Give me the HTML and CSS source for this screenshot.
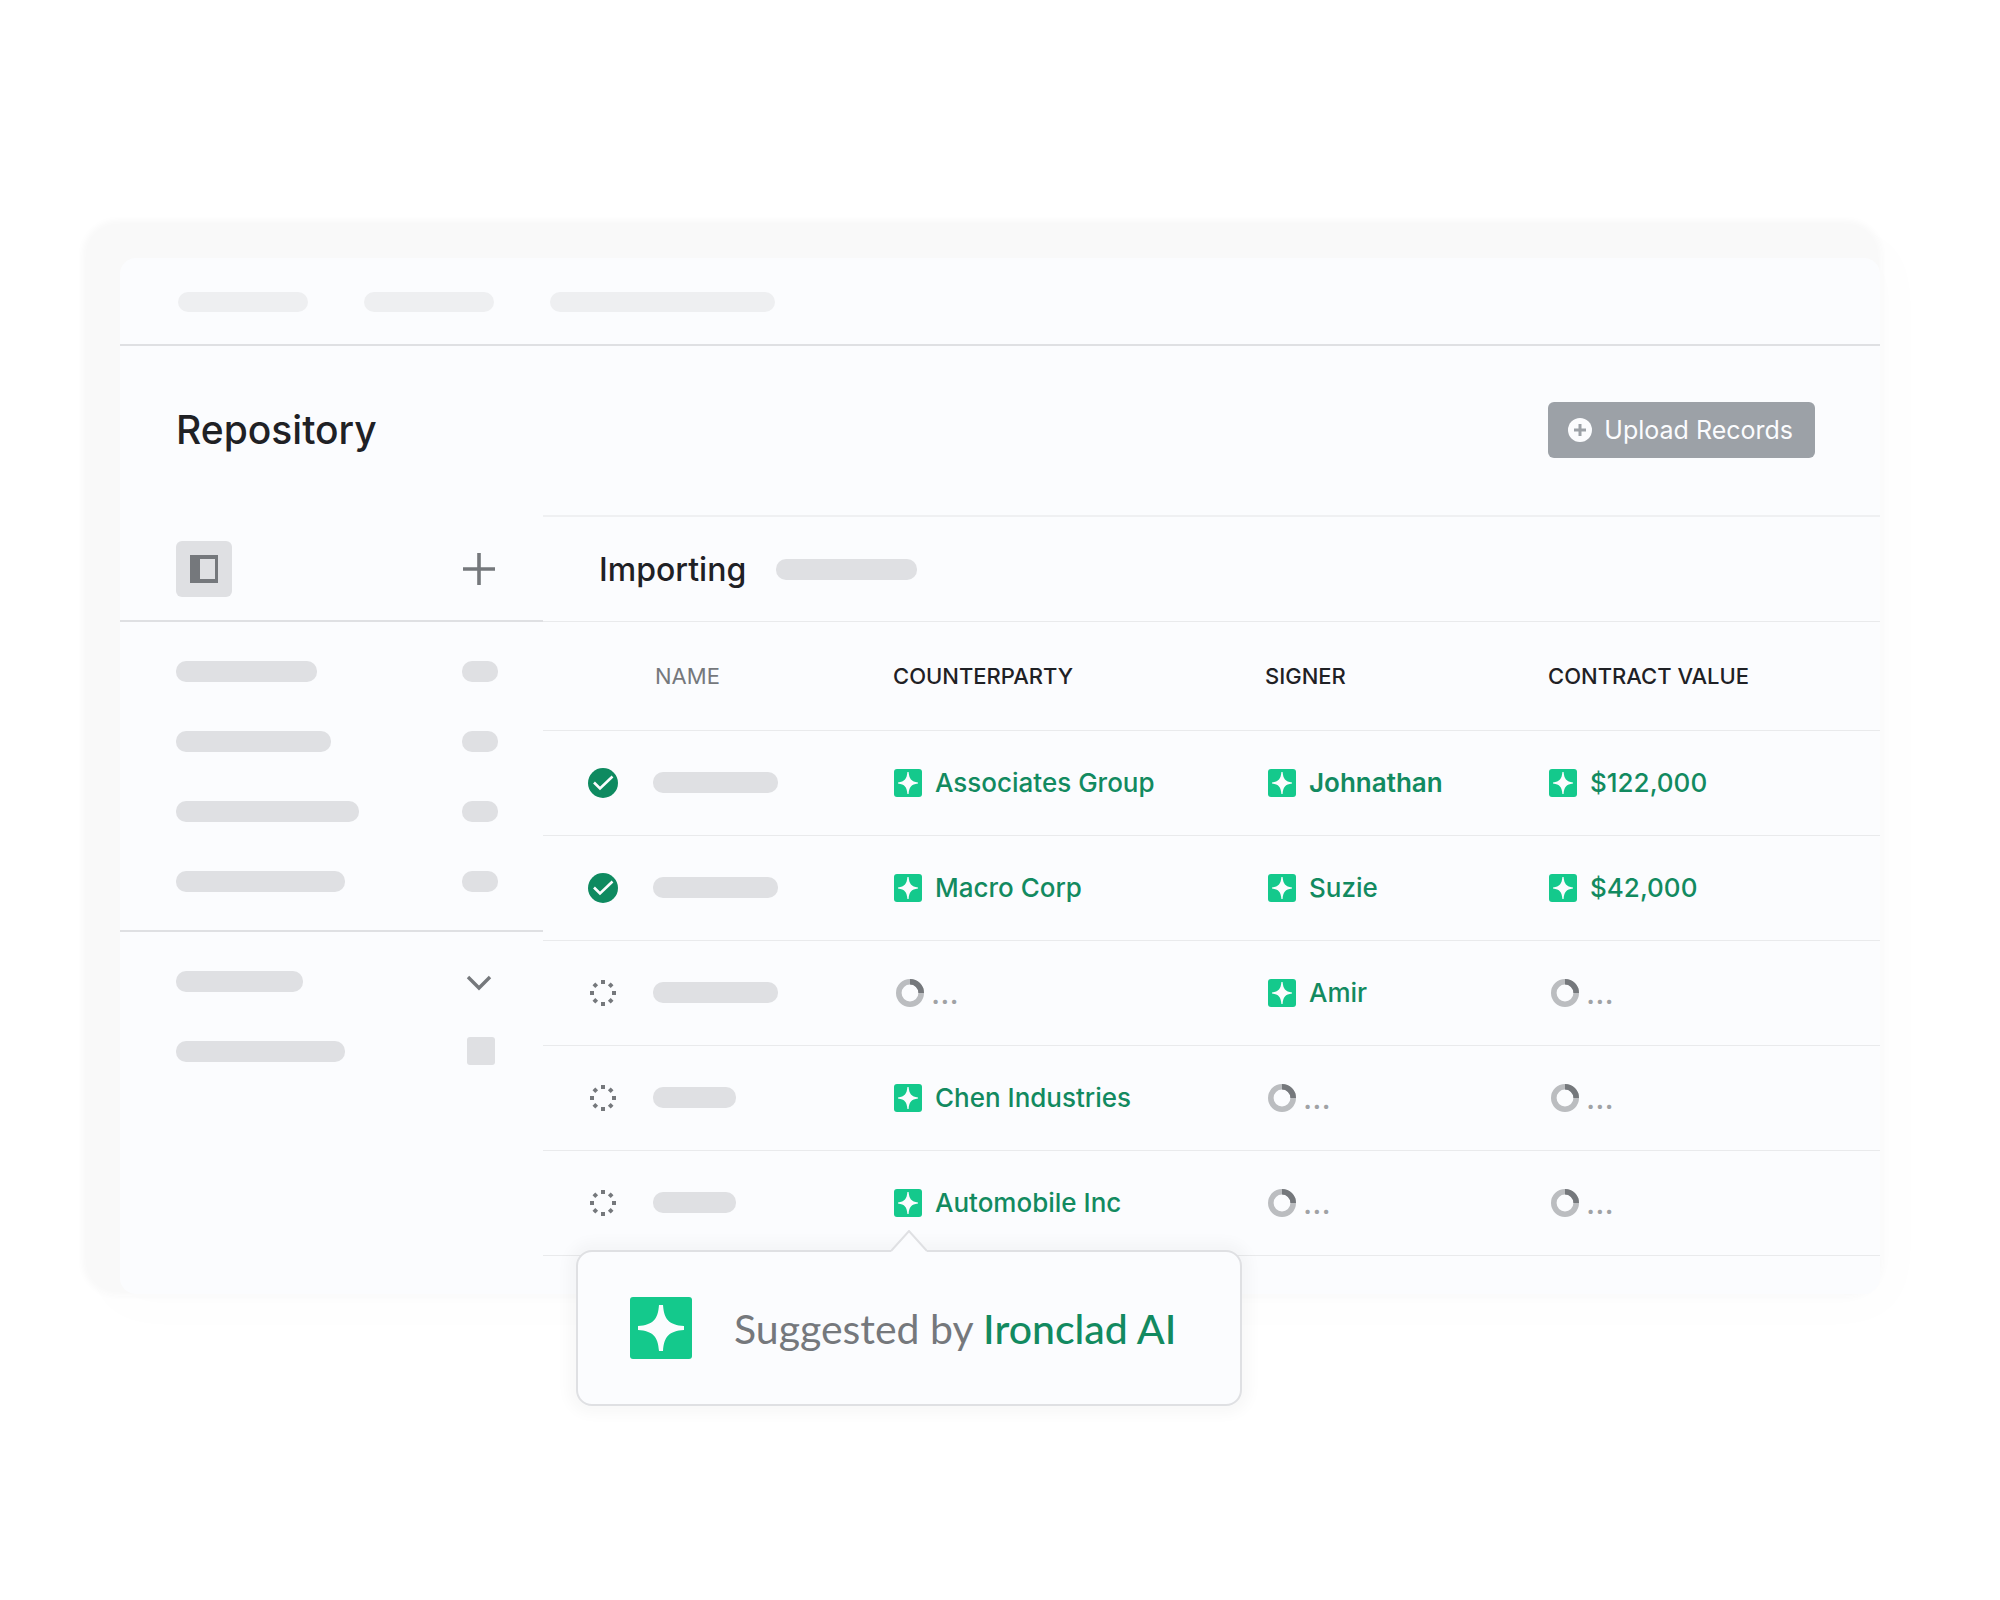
FILE: index.html
```html
<!DOCTYPE html>
<html lang="en">
<head>
  <meta charset="UTF-8">
  <meta name="viewport" content="width=device-width, initial-scale=1.0">
  <title>Repository</title>
  <link rel="stylesheet" href="styles.css">
</head>
<body>
  <!-- shared icons -->
  <svg class="sprite" aria-hidden="true">
    <symbol id="star" viewBox="0 0 28 28">
      <rect width="28" height="28" rx="3" fill="#14c98c"/>
      <path fill="#fbfcfe" d="M13.400 3h1.200c.6 6.800 2.600 9.600 9.400 10.400v1.200c-6.800.8-8.800 3.600-9.400 10.400h-1.200c-.6-6.800-2.600-9.600-9.400-10.400v-1.200c6.800-.8 8.800-3.600 9.400-10.400z"/>
    </symbol>
    <symbol id="check" viewBox="0 0 30 30">
      <circle cx="15" cy="15" r="15" fill="#0e8a60"/>
      <path d="M6 14.500l6 6L24.500 8.500" fill="none" stroke="#fbfcfe" stroke-width="2.600"/>
    </symbol>
    <symbol id="dots" viewBox="0 0 30 30">
      <g fill="#75787c">
        <path d="M13 2h4v4h-4zM13 24h4v4h-4zM2 13h4v4H2zM24 13h4v4h-4z"/>
        <path d="M7.300 4.500l2.800 2.800-2.800 2.800-2.800-2.800zM22.700 4.500l2.800 2.800-2.800 2.800-2.800-2.800zM7.300 19.900l2.800 2.800-2.800 2.800-2.800-2.800zM22.700 19.900l2.800 2.800-2.800 2.800-2.800-2.800z"/>
      </g>
    </symbol>
    <symbol id="spinner" viewBox="0 0 28 28">
      <circle cx="14" cy="14" r="11.200" fill="none" stroke="#bbbdc0" stroke-width="5.600"/>
      <path d="M14 2.800A11.200 11.200 0 0 1 25.200 14" fill="none" stroke="#75787c" stroke-width="5.600"/>
    </symbol>
  </svg>

  <main class="stage">
    <div class="window">
      <nav class="topbar">
        <span class="pill light w-130"></span>
        <span class="pill light w-130"></span>
        <span class="pill light w-225"></span>
      </nav>

      <header class="page-head">
        <h1>Repository</h1>
        <button class="upload" type="button">
          <svg viewBox="0 0 24 24"><circle cx="12" cy="12" r="12" fill="#fbfcfe"/><path d="M12 6v12M6 12h12" stroke="#9ca1a7" stroke-width="3"/></svg>
          Upload Records
        </button>
      </header>

      <div class="columns">
        <aside class="sidebar">
          <div class="side-tools">
            <button class="panel-btn" type="button" aria-label="Toggle sidebar">
              <svg viewBox="0 0 28 28"><path fill="#75787c" fill-rule="evenodd" d="M0 0h28v28H0zM10 4v20h15V4z"/></svg>
            </button>
            <button class="icon-btn" type="button" aria-label="Add">
              <svg viewBox="0 0 32 32"><path d="M16 0v32M0 16h32" stroke="#75787c" stroke-width="3.600"/></svg>
            </button>
          </div>
          <ul class="side-list">
            <li><span class="pill w-141"></span><span class="pill w-36"></span></li>
            <li><span class="pill w-155"></span><span class="pill w-36"></span></li>
            <li><span class="pill w-183"></span><span class="pill w-36"></span></li>
            <li><span class="pill w-169"></span><span class="pill w-36"></span></li>
          </ul>
          <ul class="side-list last">
            <li>
              <span class="pill w-127"></span>
              <button class="icon-btn chevron" type="button" aria-label="Expand">
                <svg viewBox="0 0 32 32"><path d="M5 12l11 11 11-11" fill="none" stroke="#75787c" stroke-width="3.400"/></svg>
              </button>
            </li>
            <li><span class="pill w-169"></span><span class="square"></span></li>
          </ul>
        </aside>

        <section class="content">
          <div class="importing">
            <h2>Importing</h2>
            <span class="pill w-141"></span>
          </div>
          <table>
            <colgroup>
              <col class="c-status"><col class="c-name"><col class="c-party"><col class="c-signer"><col>
            </colgroup>
            <thead>
              <tr>
                <th aria-label="Status"></th>
                <th class="muted">NAME</th>
                <th>COUNTERPARTY</th>
                <th>SIGNER</th>
                <th>CONTRACT VALUE</th>
              </tr>
            </thead>
            <tbody>
              <tr>
                <td><svg class="status"><use href="#check"/></svg></td>
                <td><span class="pill w-125"></span></td>
                <td><div class="value"><svg><use href="#star"/></svg>Associates Group</div></td>
                <td><div class="value strong"><svg><use href="#star"/></svg>Johnathan</div></td>
                <td><div class="value"><svg><use href="#star"/></svg>$122,000</div></td>
              </tr>
              <tr>
                <td><svg class="status"><use href="#check"/></svg></td>
                <td><span class="pill w-125"></span></td>
                <td><div class="value"><svg><use href="#star"/></svg>Macro Corp</div></td>
                <td><div class="value"><svg><use href="#star"/></svg>Suzie</div></td>
                <td><div class="value"><svg><use href="#star"/></svg>$42,000</div></td>
              </tr>
              <tr>
                <td><svg class="status"><use href="#dots"/></svg></td>
                <td><span class="pill w-125"></span></td>
                <td><div class="value pending"><svg><use href="#spinner"/></svg>...</div></td>
                <td><div class="value"><svg><use href="#star"/></svg>Amir</div></td>
                <td><div class="value pending"><svg><use href="#spinner"/></svg>...</div></td>
              </tr>
              <tr>
                <td><svg class="status"><use href="#dots"/></svg></td>
                <td><span class="pill w-83"></span></td>
                <td><div class="value"><svg><use href="#star"/></svg>Chen Industries</div></td>
                <td><div class="value pending"><svg><use href="#spinner"/></svg>...</div></td>
                <td><div class="value pending"><svg><use href="#spinner"/></svg>...</div></td>
              </tr>
              <tr>
                <td><svg class="status"><use href="#dots"/></svg></td>
                <td><span class="pill w-83"></span></td>
                <td>
                  <div class="value anchor"><svg><use href="#star"/></svg>Automobile Inc
                    <div class="tooltip" role="tooltip">
                      <svg class="arrow" viewBox="0 0 36 22"><path d="M0 21L18 1l18 20v1H0z" fill="#fbfcfe"/><path d="M0 21L18 1l18 20" fill="none" stroke="#dfe0e3" stroke-width="2"/></svg>
                      <svg class="tip-icon" viewBox="0 0 62 62"><rect width="62" height="62" rx="3" fill="#14c98c"/><path fill="#fbfcfe" d="M29 8h4c1 14.500 6 20 21 21v4c-15 1-20 6.500-21 21h-4c-1-14.500-6-20-21-21v-4c15-1 20-6.500 21-21z"/></svg>
                      <p>Suggested by <b>Ironclad AI</b></p>
                    </div>
                  </div>
                </td>
                <td><div class="value pending"><svg><use href="#spinner"/></svg>...</div></td>
                <td><div class="value pending"><svg><use href="#spinner"/></svg>...</div></td>
              </tr>
            </tbody>
          </table>
        </section>
      </div>
    </div>
  </main>
</body>
</html>
```
FILE: styles.css
```css
* {
  box-sizing: border-box;
}
body {
  margin: 0;
  background: #fff;
  color: #1f2125;
  font-family: Inter, sans-serif;
}
h1, h2, p, ul {
  margin: 0;
  padding: 0;
}
svg {
  display: block;
  flex: none;
}
button {
  border: 0;
  padding: 0;
  background: none;
  font: inherit;
}
.sprite {
  position: absolute;
  width: 0;
  height: 0;
}
.stage {
  padding: 258px 120px;
}
.window {
  padding-bottom: 38px;
  border-radius: 16px;
  background: #fbfcfe;
  box-shadow: -18px -18px 6px 20px #f9f9f9, 0 0 50px 20px #fdfdfd;
}

/* placeholder bars */
.pill {
  display: block;
  height: 21px;
  border-radius: 10px;
  background: #dfe0e3;
}
.pill.light {
  height: 20px;
  background: #eeeff1;
}
.w-36 { width: 36px; }
.w-83 { width: 83px; }
.w-125 { width: 125px; }
.w-127 { width: 127px; }
.w-130 { width: 130px; }
.w-141 { width: 141px; }
.w-155 { width: 155px; }
.w-169 { width: 169px; }
.w-183 { width: 183px; }
.w-225 { width: 225px; }

.topbar {
  display: flex;
  align-items: center;
  gap: 56px;
  height: 88px;
  padding: 2px 58px 0;
  border-bottom: 2px solid #dfe0e3;
}
.page-head {
  display: flex;
  align-items: center;
  justify-content: space-between;
  height: 169px;
  padding: 0 65px 2px 56px;
}
h1 {
  font-size: 39px;
  font-weight: 500;
}
.upload {
  display: flex;
  align-items: center;
  gap: 12px;
  height: 56px;
  padding: 0 22px 0 20px;
  border-radius: 6px;
  background: #9ca1a7;
  color: #fbfcfe;
  font-size: 25px;
}
.upload svg {
  width: 24px;
  height: 24px;
}

.columns {
  display: flex;
}
.sidebar {
  width: 423px;
}
.side-tools {
  display: flex;
  align-items: center;
  justify-content: space-between;
  height: 107px;
  padding: 2px 48px 0 56px;
  border-bottom: 2px solid #dfe0e3;
}
.panel-btn {
  display: flex;
  align-items: center;
  justify-content: center;
  width: 56px;
  height: 56px;
  border-radius: 6px;
  background: #dfe0e3;
}
.panel-btn svg {
  width: 28px;
  height: 28px;
}
.icon-btn svg {
  width: 32px;
  height: 32px;
}
.side-list {
  padding: 14px 45px 14px 56px;
  border-bottom: 2px solid #dfe0e3;
  list-style: none;
}
.side-list li {
  display: flex;
  align-items: center;
  justify-content: space-between;
  height: 70px;
}
.side-list.last {
  border: 0;
}
.chevron {
  padding-right: 3px;
}
.square {
  width: 28px;
  height: 28px;
  margin-right: 3px;
  border-radius: 3px;
  background: #dfe0e3;
}

.content {
  flex: 1;
  border-top: 2px solid #eff0f2;
}
.importing {
  display: flex;
  align-items: center;
  gap: 30px;
  height: 105px;
  padding-left: 56px;
  border-bottom: 1px solid #e9eaec;
}
h2 {
  font-size: 32px;
  font-weight: 450;
}
table {
  width: 100%;
  border-collapse: collapse;
  table-layout: fixed;
}
.c-status { width: 110px; }
.c-name { width: 240px; }
.c-party { width: 372px; }
.c-signer { width: 283px; }
th, td {
  padding: 0;
  border-bottom: 1px solid #e9eaec;
  text-align: left;
}
th {
  height: 108px;
  font-size: 22px;
  font-weight: 450;
}
th.muted {
  padding-left: 2px;
  color: #75787c;
  font-weight: 400;
}
td {
  height: 105px;
}
.status {
  width: 30px;
  height: 30px;
  margin-left: 45px;
}
.value {
  display: flex;
  align-items: center;
  gap: 13px;
  padding-left: 1px;
  color: #128a60;
  font-size: 26px;
  font-weight: 500;
}
.value svg {
  width: 28px;
  height: 28px;
}
td:nth-child(4) .value {
  padding-left: 3px;
}
.strong {
  font-weight: 600;
}
.pending {
  gap: 7px;
  padding-left: 3px;
  color: #a0a2a5;
  font-size: 32px;
  font-weight: 400;
}

/* hangs under the star icon of its cell */
.anchor {
  position: relative;
}
.value .tooltip {
  position: absolute;
  top: 63px;
  left: -317px;
  display: flex;
  align-items: center;
  gap: 42px;
  width: max-content;
  height: 156px;
  padding: 0 64px 0 52px;
  border: 2px solid #dfe0e3;
  border-radius: 16px;
  background: #fbfcfe;
  box-shadow: 0 0 14px 8px rgba(0, 0, 0, 0.03);
}
.tooltip .arrow {
  position: absolute;
  top: -22px;
  left: 313px;
  width: 36px;
  height: 22px;
}
.tooltip .tip-icon {
  width: 62px;
  height: 62px;
}
.tooltip p {
  color: #75787c;
  font-family: Lato, sans-serif;
  font-size: 41px;
  font-weight: 400;
}
.tooltip b {
  color: #128a60;
  font-weight: 500;
}
```
